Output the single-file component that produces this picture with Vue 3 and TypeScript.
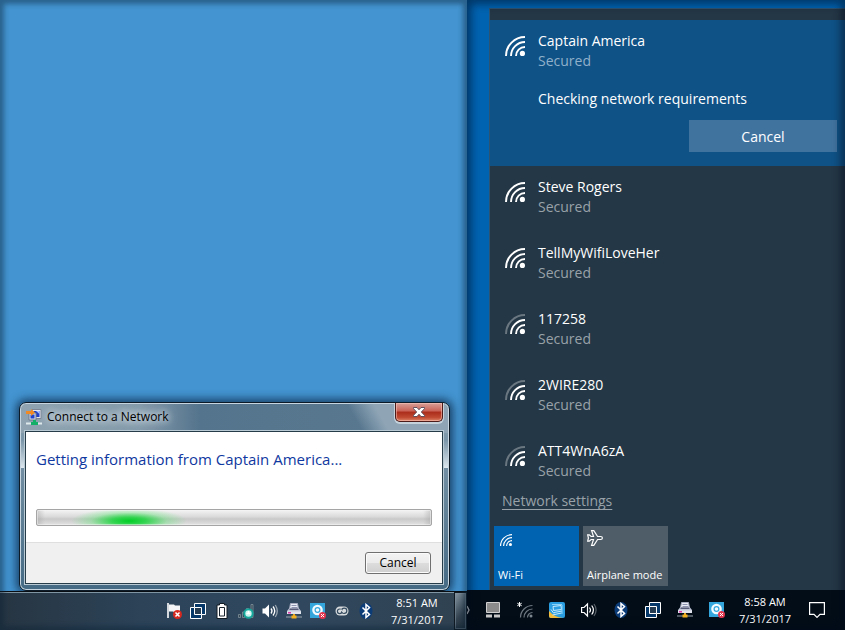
<script setup lang="ts">
interface Network {
  name: string
  strength: 'full' | 'medium'
}

const networks: Network[] = [
  { name: 'Steve Rogers', strength: 'full' },
  { name: 'TellMyWifiLoveHer', strength: 'full' },
  { name: '117258', strength: 'medium' },
  { name: '2WIRE280', strength: 'medium' },
  { name: 'ATT4WnA6zA', strength: 'medium' },
]
</script>

<template>
  <svg class="symbols" aria-hidden="true">
    <symbol id="wifi-full" viewBox="0 0 20 20">
      <g fill="none" stroke="currentColor" stroke-width="1.9">
        <path d="M1 20A19 19 0 0 1 20 1" />
        <path d="M6 20A14 14 0 0 1 20 6" />
        <path d="M11 20A9 9 0 0 1 20 11" />
      </g>
      <circle cx="17.4" cy="17.4" r="2.6" fill="currentColor" />
    </symbol>
    <symbol id="wifi-medium" viewBox="0 0 20 20">
      <g fill="none" stroke="currentColor" stroke-width="1.9">
        <path d="M1 20A19 19 0 0 1 20 1" opacity=".32" />
        <path d="M6 20A14 14 0 0 1 20 6" />
        <path d="M11 20A9 9 0 0 1 20 11" />
      </g>
      <circle cx="17.4" cy="17.4" r="2.6" fill="currentColor" />
    </symbol>
    <symbol id="windows" viewBox="0 0 16 16">
      <path d="M4.5 .5h11v11h-11z" fill="#06386a" stroke="#fff" />
      <path d="M.5 4.500h11v11h-11z" fill="#06386a" />
      <path d="M4.500 4.500H.5v11h11v-4" fill="none" stroke="#fff" />
      <path d="M4.500 4.500h7v7h-7z" fill="#263c50" stroke="#fff" />
    </symbol>
    <symbol id="printer" viewBox="0 0 16 16">
      <path d="M4.500 .5h7l1 5.500h-9z" fill="#e9edf6" stroke="#a7abc0" />
      <path d="M5.500 2.500h5M5.500 4.500h6" stroke="#8d93b0" />
      <path d="M3 5.500h10l2 2.500v3H1V8z" fill="#c3c8d8" />
      <path d="M4 5.500h8l.8 1.500H3.200z" fill="#565b78" />
      <path d="M1 8.500h14V11H1z" fill="#e2e5ee" />
      <path d="M2 9h3v1.500H2z" fill="#d93ba9" />
      <path d="M0 14h16" stroke="#9aa5ae" />
      <path d="M8 11v2" stroke="#e8a51c" stroke-width="2" />
      <path d="M5.500 12.500h5v3h-5z" fill="#f2b01e" />
    </symbol>
    <symbol id="disc" viewBox="0 0 16 16">
      <path d="M0 0h15v15H0z" fill="#35a6dc" />
      <circle cx="7.500" cy="7" r="5.300" fill="#f3fbff" />
      <circle cx="7.500" cy="7" r="2.400" fill="none" stroke="#35a6dc" stroke-width="1.200" />
      <circle cx="12.500" cy="12.500" r="3.500" fill="#e3364f" />
      <path d="M11 11l3 3m0-3l-3 3" stroke="#fff" />
    </symbol>
    <symbol id="speaker" viewBox="0 0 16 16">
      <path d="M.5 5.500H3L7 1.500v13L3 10.500H.5z" fill="currentColor" />
      <g fill="none" stroke="#fff" stroke-width="1.300">
        <path d="M9 5.500q2 2.500 0 5" />
        <path d="M11 3.500q3.500 4.500 0 9" />
        <path d="M13.300 2q4 6 0 12" opacity=".5" />
      </g>
    </symbol>
    <symbol id="bluetooth" viewBox="0 0 16 16">
      <ellipse cx="8" cy="8" rx="6.500" ry="8" fill="#0c3c78" />
      <path d="M4.500 4.500l7 7L8 14.500V1.500l3.500 3-7 7" fill="none" stroke="#fff" stroke-width="1.500" />
    </symbol>
  </svg>

  <main class="screens">
    <section class="screen left">
      <div class="desktop">
        <div class="dialog" role="dialog" aria-labelledby="dialog-title">
          <header class="titlebar">
            <svg class="net-icon" viewBox="0 0 16 16" aria-hidden="true">
              <path d="M6 .5h9v9H6z" fill="#e4e7ef" stroke="#7c8594" />
              <path d="M7.500 2h6v6h-6z" fill="#1f3fc8" />
              <path d="M10 2h3.500v3z" fill="#a9c4ff" />
              <path d="M3 4h7v7H3z" fill="#d9deea" stroke="#717b8e" />
              <path d="M4.500 5.500h4v4h-4z" fill="#2046cf" />
              <path d="M0 2h5V0l4 3.500L5 7V5H0z" fill="#f08a24" />
              <path d="M0 14.500h16" stroke="#dfe9ec" stroke-width="2" />
              <path d="M7 11h3v2h2v3H5v-3h2z" fill="#13ae67" />
            </svg>
            <h1 id="dialog-title">Connect to a Network</h1>
            <button class="close" type="button" aria-label="Close">
              <svg viewBox="0 0 12 10" aria-hidden="true">
                <path d="M.5.5h3.500L6 2.800 8 .5h3.500v1.200L8.300 5l3.200 3.300v1.200H8L6 7.200 4 9.500H.5V8.300L3.700 5 .5 1.700z" fill="#fff" stroke="#544555" stroke-width=".9" />
              </svg>
            </button>
          </header>
          <div class="pane">
            <div class="message">
              <h2>Getting information from Captain America...</h2>
              <div class="progress" role="progressbar" aria-label="Connecting"></div>
            </div>
            <footer class="actions">
              <button class="cancel" type="button">Cancel</button>
            </footer>
          </div>
        </div>
      </div>
      <div class="taskbar aero">
        <div class="tray">
          <svg viewBox="0 0 16 16">
            <path d="M2 0v15" stroke="#fff" stroke-width="1.600" />
            <path d="M3 1.500h5l1 1h5v7H8l-1-1H3z" fill="#f3f5f6" />
            <circle cx="11.500" cy="11.500" r="4.500" fill="#d7281f" />
            <path d="M9.500 9.500l4 4m0-4l-4 4" stroke="#fff" stroke-width="1.500" />
          </svg>
          <svg><use href="#windows" /></svg>
          <svg viewBox="0 0 16 16">
            <path d="M5.500 .5h5V2H13v13.500H3V2h2.500z" fill="#fff" stroke="#111b24" />
            <path d="M5.500 4.500h5v8.500h-5z" fill="#fff" stroke="#18232d" />
          </svg>
          <svg viewBox="0 0 16 16">
            <path d="M.5 11.500h2v3h-2zM4.500 9h2v5.500h-2zM8.500 5.500h2v9h-2zM13 1.500h2v13h-2z" fill="#344753" stroke="#8b9ba3" stroke-width=".7" />
            <circle cx="10.500" cy="10.500" r="4.200" fill="#c4f4ee" stroke="#16a79c" stroke-width="2" />
            <path d="M8.500 10.500h4M10.500 8v2.500" stroke="#fff" stroke-width="1.500" />
          </svg>
          <svg><use href="#speaker" /></svg>
          <svg><use href="#printer" /></svg>
          <svg><use href="#disc" /></svg>
          <svg viewBox="0 0 16 16">
            <rect x="1.500" y="3.500" width="13" height="9" rx="4.500" fill="#d8dcde" />
            <circle cx="5.700" cy="8.300" r="2.300" fill="none" stroke="#354b5f" stroke-width="1.200" />
            <circle cx="10.200" cy="7.800" r="2.600" fill="none" stroke="#354b5f" stroke-width="1.200" />
            <path d="M6.500 6.500l3.500 3" stroke="#d8dcde" stroke-width="1.400" />
          </svg>
          <svg><use href="#bluetooth" /></svg>
        </div>
        <div class="clock"><span>8:51 AM</span><span>7/31/2017</span></div>
        <button class="show-desktop" type="button" aria-label="Show desktop"></button>
      </div>
    </section>

    <section class="screen right">
      <div class="desktop">
        <div class="flyout">
          <article class="network active">
            <svg class="wifi"><use href="#wifi-full" /></svg>
            <div class="details">
              <h3>Captain America</h3>
              <p class="status">Secured</p>
              <p class="checking">Checking network requirements</p>
            </div>
            <button class="cancel" type="button">Cancel</button>
          </article>
          <article v-for="network in networks" :key="network.name" class="network">
            <svg class="wifi"><use :href="'#wifi-' + network.strength" /></svg>
            <div class="details">
              <h3>{{ network.name }}</h3>
              <p class="status">Secured</p>
            </div>
          </article>
          <a class="settings" href="#settings">Network settings</a>
          <div class="tiles">
            <button class="tile on" type="button">
              <svg class="small-wifi"><use href="#wifi-full" /></svg>
              <span>Wi-Fi</span>
            </button>
            <button class="tile" type="button">
              <svg viewBox="0 0 16 16">
                <path d="M.7 4.800h1.600l1.800 1.700h2.400L4.600.7h2.200l3.800 5.800h3q1.800 0 1.800 1.500t-1.800 1.500h-3l-3.800 5.800H4.600l1.900-5.800H4.100l-1.800 1.700H.7L1.400 8z" fill="none" stroke="currentColor" stroke-width="1.200" />
              </svg>
              <span>Airplane mode</span>
            </button>
          </div>
        </div>
      </div>
      <div class="taskbar flat">
        <svg class="chevron" viewBox="0 0 3 10"><path d="M0 1l2 4-2 4" fill="none" stroke="#c8cdd2" stroke-width="1.300" /></svg>
        <div class="tray">
          <svg viewBox="0 0 16 16">
            <path d="M1.500.5h13v10h-13z" fill="#8b8b8b" stroke="#d0d0d0" />
            <path d="M1 12.500h6v3H1zM9 12.500h6v3H9z" fill="#c8c8c8" />
          </svg>
          <svg viewBox="0 0 16 16">
            <g fill="none" stroke="#6e7881" stroke-width="1.200">
              <path d="M3.500 15.500A12 12 0 0 1 15.500 3.500" />
              <path d="M7 15.500A8.500 8.500 0 0 1 15.500 7" />
              <path d="M10.500 15.500A5 5 0 0 1 15.500 10.500" />
            </g>
            <circle cx="14" cy="14" r="1.500" fill="#7d8790" />
            <path d="M2.500 0v5M.3 1.200l4.400 2.600M.3 3.800l4.400-2.600" stroke="#fff" />
          </svg>
          <svg viewBox="0 0 16 16">
            <rect width="16" height="16" rx="2" fill="#2a9de0" />
            <path d="M0 9q5 6 14 7H2q-2 0-2-2z" fill="#f3bc3b" />
            <path d="M4 4.500l8-1 .5 4-8 1zM5 10.500l8-1.500M3.500 13l9-2M2 7.500l3 4" fill="none" stroke="#c8ecfd" />
            <path d="M3 2.500h10M13 3v9" stroke="#8bd3f8" />
          </svg>
          <svg viewBox="0 0 16 16">
            <path d="M.6 5.500H3L6.500 2v12L3 10.500H.6z" fill="none" stroke="#fff" stroke-width="1.200" />
            <g fill="none" stroke="#fff" stroke-width="1.200">
              <path d="M8.500 5.500q2 2.500 0 5" />
              <path d="M10.700 3.500q3.400 4.500 0 9" />
              <path d="M13 2q4.200 6 0 12" opacity=".35" />
            </g>
          </svg>
          <svg><use href="#bluetooth" /></svg>
          <svg><use href="#windows" /></svg>
          <svg><use href="#printer" /></svg>
          <svg><use href="#disc" /></svg>
        </div>
        <div class="clock"><span>8:58 AM</span><span>7/31/2017</span></div>
        <button class="action-center" type="button" aria-label="Notifications">
          <svg viewBox="0 0 16 16"><path d="M.6.6h14.800v11.800h-4.400L8 15.400l-3-3H.6z" fill="none" stroke="#fff" stroke-width="1.200" /></svg>
        </button>
      </div>
    </section>
  </main>
</template>

<style>
body {
  margin: 0;
}
</style>

<style scoped>
* {
  box-sizing: border-box;
}

h1,
h2,
h3,
p {
  margin: 0;
  font-weight: 400;
}

button {
  font-family: inherit;
  padding: 0;
  border: 0;
}

svg {
  display: block;
  flex: none;
}

.symbols {
  position: absolute;
  width: 0;
  height: 0;
}

.screens {
  display: grid;
  grid-template-columns: 467fr 378fr;
  min-height: 100vh;
  font-family: 'Open Sans', 'Noto Sans', sans-serif;
}

.screen {
  position: relative;
  display: flex;
  flex-direction: column;
  min-width: 0;
}

.screen::after {
  content: '';
  position: absolute;
  inset: 0;
  pointer-events: none;
}

.left {
  background: #4394d1;
}

.left::after {
  box-shadow: inset 0 0 5px 4px rgba(10, 35, 55, 0.45);
}

.right {
  background: #0063b1;
}

.right::after {
  box-shadow: inset 0 0 8px 4px rgba(0, 10, 25, 0.5);
}

.desktop {
  flex: 1;
  display: flex;
  align-items: flex-end;
}

/* Aero dialog */
.dialog {
  flex: 1;
  margin: 0 17px 0 19px;
  padding: 0 6px 6px 5px;
  border: 1px solid #0b1a26;
  border-radius: 7px;
  background:
    linear-gradient(#0000 20%, #dfe9f0 35%, #0000 35%) left / 5px 100% no-repeat,
    linear-gradient(#0000 20%, #dfe9f0 35%, #0000 35%) right / 6px 100% no-repeat,
    linear-gradient(60deg, #0000 77%, #8fa5b6 83%) top / 100% 30px no-repeat,
    linear-gradient(to bottom, #0000 30px, #7f99ab 30px, #456a84 100%),
    linear-gradient(90deg, #8fa3b1, #8299a9 28%, #54748d 42%, #5b7a91);
  box-shadow:
    inset 0 0 0 1px #c6d5df,
    0 0 9px 3px rgba(5, 25, 50, 0.65);
}

.titlebar {
  display: flex;
  align-items: center;
  gap: 5px;
  height: 28px;
  padding-left: 1px;
}

.net-icon {
  width: 16px;
  height: 16px;
}

.titlebar h1 {
  flex: 1;
  font-size: 12px;
  line-height: 16px;
  color: #000;
  text-shadow:
    0 0 6px #e4ebf0,
    0 0 10px #d4dfe6,
    0 0 14px #c8d5de;
}

.close {
  display: flex;
  align-items: center;
  justify-content: center;
  align-self: flex-start;
  width: 48px;
  height: 19px;
  border: 1px solid #4c1c1b;
  border-top: 0;
  border-radius: 0 0 5px 5px;
  background: linear-gradient(#d8a098, #c96155 45%, #ab2c1b 50%, #c04a32 80%, #dc8467);
  box-shadow:
    inset 0 0 0 1px rgba(255, 205, 195, 0.5),
    0 1px 0 1px rgba(220, 230, 237, 0.7);
}

.close svg {
  width: 12px;
  height: 10px;
}

.pane {
  border: 1px solid #263c49;
  background: #fff;
  box-shadow: 0 0 0 1px #b9cad5;
}

.message {
  padding: 16px 10px;
}

.message h2 {
  font-size: 15px;
  line-height: 22px;
  color: #0f38a0;
  white-space: nowrap;
}

.progress {
  height: 17px;
  margin-top: 39px;
  border: 1px solid #a5a5a5;
  border-radius: 2px;
  background:
    radial-gradient(ellipse 58px 13px at 92px 11px, #00cf25, #10d433cc 30%, #46e56155 65%, #7bee8f00),
    linear-gradient(90deg, #9996, #0000 8px calc(100% - 8px), #9996),
    linear-gradient(#f4f4f4, #dadada 45%, #c9c9c9 60%, #e2e2e2);
  box-shadow: inset 0 0 0 1px #f3f3f388;
}

.actions {
  display: flex;
  justify-content: flex-end;
  padding: 9px 11px;
  border-top: 1px solid #dfdfdf;
  background: #f0f0f0;
}

.actions .cancel {
  width: 66px;
  height: 22px;
  border: 1px solid #707070;
  border-radius: 3px;
  background: linear-gradient(#f3f3f3, #ebebeb 50%, #dddddd 50%, #cfcfcf);
  box-shadow: inset 0 0 0 1px #fbfbfb;
  font-size: 12px;
  line-height: 18px;
  color: #000;
}

/* Taskbars */
.taskbar {
  display: flex;
  align-items: center;
  justify-content: flex-end;
  color: #fff;
}

.aero {
  height: 39px;
  border-top: 1px solid #080d13;
  background: linear-gradient(90deg, #273542, #2c4358 30%, #30485f 60%, #304251);
  box-shadow: inset 0 1px 0 #8095a3;
}

.tray {
  display: flex;
}

.tray svg {
  width: 16px;
  height: 16px;
}

.aero .tray {
  gap: 8px;
}

.flat .tray {
  gap: 16px;
}

.clock {
  display: flex;
  flex-direction: column;
  align-items: center;
  width: 80px;
  font-size: 11px;
  line-height: 17px;
}

.aero .clock {
  padding-left: 6px;
}

.show-desktop {
  align-self: stretch;
  width: 13px;
  border: 1px solid #101921;
  background: linear-gradient(135deg, #8595a1, #33424f 60%, #1d2a35);
  box-shadow: inset 0 0 0 1px #82919d88;
}

.flat {
  height: 40px;
  padding-right: 20px;
  background: #020d18;
}

.chevron {
  width: 3px;
  height: 10px;
  margin-right: auto;
}

.action-center {
  margin-left: 4px;
  background: none;
}

.action-center svg {
  width: 16px;
  height: 16px;
}

/* Network flyout */
.flyout {
  flex: 1;
  align-self: stretch;
  margin: 8px 0 0 22px;
  padding-top: 11px;
  border: 1px solid #2d5473;
  border-width: 1px 0 0 1px;
  background: #243746;
  color: #fff;
}

.network {
  display: grid;
  grid-template-columns: 20px 1fr;
  gap: 11px 13px;
  align-content: start;
  height: 66px;
  padding: 11px 8px 0 15px;
}

.network.active {
  height: 146px;
  background: #0f5286;
}

.wifi {
  width: 20px;
  height: 20px;
  margin-top: 5px;
}

.details h3,
.status,
.checking {
  font-size: 14px;
  line-height: 20px;
}

.status {
  color: #99a2a9;
}

.active .status {
  color: #8fb0ca;
}

.checking {
  margin-top: 18px;
}

.network .cancel {
  grid-column: 1 / -1;
  justify-self: end;
  width: 148px;
  height: 32px;
  background: #41739f;
  color: #fff;
  font-size: 14px;
}

.settings {
  display: block;
  width: fit-content;
  margin: -5px 0 0 12px;
  color: #99a2a9;
  font-size: 14px;
  line-height: 20px;
  text-underline-offset: 3px;
}

.tiles {
  display: flex;
  gap: 4px;
  padding: 15px 4px 4px;
}

.tile {
  display: flex;
  flex-direction: column;
  align-items: flex-start;
  justify-content: space-between;
  width: 85px;
  height: 60px;
  padding: 4px;
  background: #4f5d68;
  color: #fff;
  font-size: 11px;
  line-height: 14px;
  white-space: nowrap;
}

.tile.on {
  background: #0063b1;
}

.tile svg {
  width: 16px;
  height: 16px;
}

.tile .small-wifi {
  width: 12px;
  height: 12px;
  margin: 4px 0 0 2px;
}
</style>
